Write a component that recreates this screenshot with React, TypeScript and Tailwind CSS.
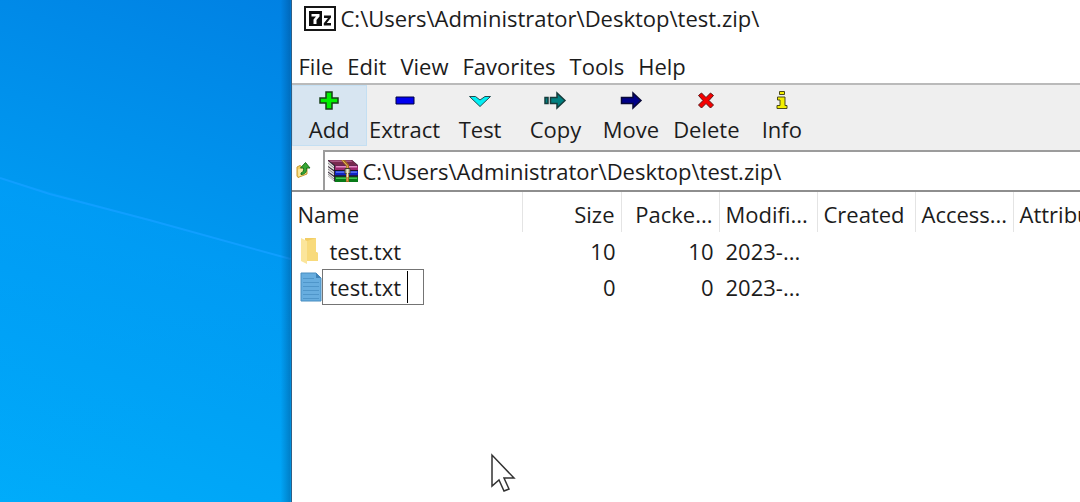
import type { ReactNode } from "react";

const PATH = "C:\\Users\\Administrator\\Desktop\\test.zip\\";
const MENUS = ["File", "Edit", "View", "Favorites", "Tools", "Help"];

const TOOLS: { label: string; icon: ReactNode }[] = [
  {
    label: "Add",
    icon: <path d="M9 2h6v6h6v5h-6v6H9v-6H3V8h6z" fill="#00f000" stroke="#173f17" strokeWidth="1.5" />,
  },
  {
    label: "Extract",
    icon: <path d="M3 7h18v7H3z" fill="#0000f0" stroke="#000040" strokeWidth="1" />,
  },
  {
    label: "Test",
    icon: <path d="M1.500 6.500h6L12 10l5-3.500h5.500L12 16.500z" fill="#00f0f5" stroke="#234b50" strokeWidth="1" />,
  },
  {
    label: "Copy",
    icon: (
      <g fill="#008080" stroke="#153b3b" strokeWidth="1.500">
        <path d="M2 7.500h3v6H2z" />
        <path d="M7.500 7.500H14V3l8 7.500-8 7.500v-4.500H7.500z" />
      </g>
    ),
  },
  {
    label: "Move",
    icon: <path d="M2.500 7.500H14V3l8 7.500-8 7.500v-4.500H2.500z" fill="#000088" stroke="#080838" strokeWidth="1.500" />,
  },
  {
    label: "Delete",
    icon: (
      <path
        d="M4.500 5.500L7.500 3 12 7.500 16.500 3l3 2.500-4.500 5 4.500 4.500-3 3L12 13.500 7.500 18l-3-3L9 10.500z"
        fill="#f50000"
        stroke="#5a1515"
        strokeWidth="1"
      />
    ),
  },
  {
    label: "Info",
    icon: (
      <g fill="#f2ee00" stroke="#4b4a18" strokeWidth="1">
        <path d="M9.500 1.500h5v3h-5z" />
        <path d="M7.500 7h7.500v8.500h2v3h-10v-3H10V10H7.500z" />
      </g>
    ),
  },
];

const COLUMNS = [
  { label: "Name", width: "w-[231px]", align: "text-left" },
  { label: "Size", width: "w-[99px]", align: "text-right" },
  { label: "Packe...", width: "w-[98px]", align: "text-right" },
  { label: "Modifi...", width: "w-[98px]", align: "text-left" },
  { label: "Created", width: "w-[98px]", align: "text-left" },
  { label: "Access...", width: "w-[98px]", align: "text-left" },
  { label: "Attributes", width: "w-[120px]", align: "text-left" },
];

function SevenZipLogo() {
  return (
    <svg viewBox="0 0 32 25" className="h-[25px] w-8 shrink-0" aria-hidden="true">
      <path d="M1 1h30v23H1z" fill="#fff" stroke="#161616" strokeWidth="2" />
      <path d="M5 5h13v15H5z" fill="#0c0c0c" />
      <path d="M7.500 8h8v2.500l-3 3.500v4H9.500v-4.500l2.500-3H7.500z" fill="#fff" />
      <path d="M20 9.500h7v2L22.800 17H27v2.500h-7.200v-2.200l4.200-5.300h-4z" fill="#111" />
    </svg>
  );
}

function UpFolderIcon() {
  return (
    <svg viewBox="0 0 16 18" className="h-[18px] w-4" aria-hidden="true">
      <path d="M1 6l3-1.500 1.500 1L11 4v9l-9 3.500L1 15z" fill="#f0cf62" stroke="#c79b34" />
      <path d="M2 8.500l8-2v6L2.500 15.500z" fill="#fae9a0" />
      <path d="M5 13.500c4 0 6-2.500 5.500-6.500H14L9.500 1.500 4.500 7H7.500c.5 2.500-.5 4.500-2.500 5z" fill="#36a834" stroke="#1d701e" />
    </svg>
  );
}

function ArchiveIcon() {
  return (
    <svg viewBox="0 0 32 26" className="h-[26px] w-8 shrink-0" aria-hidden="true">
      <path d="M1 2h24l6 5v17H8L1 18z" fill="#332637" />
      <path d="M1 2h24l5 5H8z" fill="#78294f" />
      <path d="M2 2.500h22l1.500 1.500H4z" fill="#a55783" />
      <path d="M1 3l6 5v4L1 8zM1 9l6 4.500v4L1 13.500zM1 14.500L7 19v4l-6-5z" fill="#e5e3e3" />
      <path d="M1 5l6 5M1 11l6 4.500M1 16l6 5" stroke="#777" strokeWidth=".8" />
      <path d="M8 7.500h23V12H8z" fill="#9c286d" />
      <path d="M9 8h21v1.500H9z" fill="#e38bc5" />
      <path d="M8 13h23v4.500H8z" fill="#1024c4" />
      <path d="M9 13.500h21v1.200H9z" fill="#6a8cff" />
      <path d="M8 18.500h23V24H8z" fill="#087a18" />
      <path d="M9 19.500h21V21H9z" fill="#46c950" />
      <path d="M7 12.500h24M7 18h24" stroke="#191426" />
      <path d="M14 2h4l4 5v17h-3V8z" fill="#a66a22" />
      <path d="M15.500 2.500l4.700 5V23" fill="none" stroke="#e5bd61" />
      <path d="M18 10.500h5v5h-5z" fill="#b9b9a8" stroke="#423c30" />
      <path d="M20.500 11v8" stroke="#f4edc4" strokeWidth="1.500" />
    </svg>
  );
}

function FolderIcon() {
  return (
    <svg viewBox="0 0 22 28" className="h-7 w-[22px] shrink-0" aria-hidden="true">
      <path d="M5 1h11v14l2 1v8H5z" fill="#f2cd65" />
      <path d="M1 1l6 3v23l-6-3z" fill="#fbe59b" />
      <path d="M7 4l9-3v14l2 1v8H7z" fill="#f8da7b" />
    </svg>
  );
}

function TextFileIcon() {
  return (
    <svg viewBox="0 0 22 30" className="h-[30px] w-[22px] shrink-0" aria-hidden="true">
      <path d="M1 1h15l5 5v23H1z" fill="#67addf" stroke="#498dc0" />
      <path d="M16 1v5h5z" fill="#3f83b8" />
      <path d="M3 6.500h11M3 10.500h16M3 14.500h16M3 18.500h16M3 22.500h16M3 26.500h16" stroke="#4f96ca" />
    </svg>
  );
}

function Desktop() {
  return (
    <div className="flex min-w-0 flex-7 bg-linear-[20deg] from-[#00acfa] via-[#009af1] to-[#0081e3]">
      <svg viewBox="0 0 292 502" preserveAspectRatio="none" className="w-full" aria-hidden="true">
        <defs>
          <linearGradient id="beam" x1="0" y1="0" x2="0.300" y2="1">
            <stop offset="0" stopColor="#00a2ff" stopOpacity=".35" />
            <stop offset="1" stopColor="#00a2ff" stopOpacity="0" />
          </linearGradient>
          <linearGradient id="edge">
            <stop offset="0" stopColor="#003a70" stopOpacity="0" />
            <stop offset="1" stopColor="#003a70" stopOpacity=".35" />
          </linearGradient>
        </defs>
        <path d="M0 178L292 259V502H0z" fill="url(#beam)" />
        <path d="M0 178L50 194 150 220 292 259" fill="none" stroke="#109fff" strokeWidth="2" />
        <path d="M282 0h10v502h-10z" fill="url(#edge)" />
      </svg>
    </div>
  );
}

function Row({ icon, name, size }: { icon: ReactNode; name: ReactNode; size: number }) {
  return (
    <tr className="h-9">
      <td className="p-0 pl-2">
        <div className="flex items-center">
          {icon}
          {name}
        </div>
      </td>
      <td className="p-0 pr-1.5 text-right">{size}</td>
      <td className="p-0 pr-1.5 text-right">{size}</td>
      <td className="p-0 pl-1.5">2023-...</td>
      <td />
      <td />
      <td />
    </tr>
  );
}

export default function App() {
  return (
    <div className="relative flex min-h-screen overflow-hidden font-['Open_Sans','Noto_Sans',sans-serif] text-[22px] leading-7 text-[#1c1c1c]">
      <Desktop />
      <main className="flex min-w-0 flex-19 flex-col border-l border-[#315f85] bg-white">
        <header className="flex h-11 items-center gap-[5px] pb-2 pl-3">
          <SevenZipLogo />
          <h1 className="whitespace-nowrap">{PATH}</h1>
        </header>
        <nav className="flex h-[39px] items-center gap-3.5 pt-1 pl-[7px]" aria-label="Menu bar">
          {MENUS.map((menu) => (
            <button key={menu} type="button">
              {menu}
            </button>
          ))}
        </nav>
        <div className="flex h-[67px] border-t-2 border-[#bababa] bg-[#efefef]">
          <div className="grid h-[61px] w-[528px] grid-cols-7" role="toolbar" aria-label="Archive actions">
            {TOOLS.map(({ label, icon }) => (
              <button
                key={label}
                type="button"
                className="flex flex-col items-center gap-1 whitespace-nowrap border border-transparent pt-1 first:border-[#c4dff2] first:bg-[#d7e5f1]"
              >
                <svg viewBox="0 0 24 21" className="h-[21px] w-6 shrink-0" aria-hidden="true">
                  {icon}
                </svg>
                <span>{label}</span>
              </button>
            ))}
          </div>
        </div>
        <div className="flex h-[42px] border-b-2 border-[#8e8e8e]">
          <button type="button" aria-label="Up one level" className="flex w-[31px] shrink-0 items-center pl-1">
            <UpFolderIcon />
          </button>
          <label className="flex min-w-0 flex-1 items-center gap-1 border-t-2 border-l-2 border-[#9c9c9c] pl-0.5">
            <ArchiveIcon />
            <span className="sr-only">Address</span>
            <input type="text" defaultValue={PATH} className="h-9 min-w-0 flex-1 bg-transparent outline-none" />
          </label>
        </div>
        <div className="overflow-hidden">
          <table className="w-[842px] table-fixed border-collapse whitespace-nowrap">
            <thead>
              <tr className="h-[41px] align-top">
                {COLUMNS.map(({ label, width, align }) => (
                  <th key={label} scope="col" className={`${width} ${align} p-0 font-normal`}>
                    <div className="h-10 border-r border-[#e4e4e4] px-1.5 pt-2">{label}</div>
                  </th>
                ))}
              </tr>
            </thead>
            <tbody>
              <Row icon={<FolderIcon />} name={<span className="pl-2">test.txt</span>} size={10} />
              <Row
                icon={<TextFileIcon />}
                name={
                  <div className="relative">
                    <input
                      type="text"
                      aria-label="File name"
                      defaultValue="test.txt"
                      className="block h-9 w-[102px] border border-[#747474] bg-white pl-[7px] outline-none"
                    />
                    <span className="absolute top-0.5 left-[85px] h-8 w-px bg-black" />
                  </div>
                }
                size={0}
              />
            </tbody>
          </table>
        </div>
      </main>
      <svg viewBox="0 0 26 40" className="pointer-events-none absolute top-[453px] left-[490px] h-10 w-[26px]" aria-hidden="true">
        <path d="M2 2v31l7-6 5 11 5-2-5-11h10z" fill="#fff" stroke="#333" strokeWidth="1.500" />
      </svg>
    </div>
  );
}
